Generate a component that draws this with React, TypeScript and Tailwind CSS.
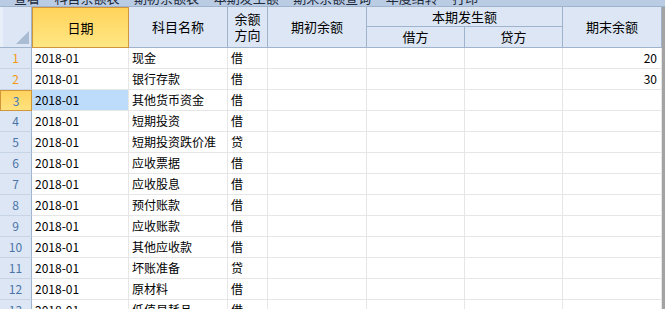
type Row = {
  no: number
  date: string
  name: string
  dir: string
  end?: string
}

const rows: Row[] = [
  { no: 1, date: "2018-01", name: "现金", dir: "借", end: "20" },
  { no: 2, date: "2018-01", name: "银行存款", dir: "借", end: "30" },
  { no: 3, date: "2018-01", name: "其他货币资金", dir: "借" },
  { no: 4, date: "2018-01", name: "短期投资", dir: "借" },
  { no: 5, date: "2018-01", name: "短期投资跌价准", dir: "贷" },
  { no: 6, date: "2018-01", name: "应收票据", dir: "借" },
  { no: 7, date: "2018-01", name: "应收股息", dir: "借" },
  { no: 8, date: "2018-01", name: "预付账款", dir: "借" },
  { no: 9, date: "2018-01", name: "应收账款", dir: "借" },
  { no: 10, date: "2018-01", name: "其他应收款", dir: "借" },
  { no: 11, date: "2018-01", name: "坏账准备", dir: "贷" },
  { no: 12, date: "2018-01", name: "原材料", dir: "借" },
  { no: 13, date: "2018-01", name: "低值易耗品", dir: "借" },
]

const cols = "grid-cols-[32px_97px_99px_40px_99px_98px_98px_99px]"
const hd = "flex items-center justify-center border-r border-b border-[#9fb3cc] bg-[#dce6f4] text-[13px] text-black"
const cell = "h-[21px] border-r border-b border-[#e6e6e6] px-[3px] leading-[20px] text-[12px] text-black whitespace-nowrap overflow-hidden"

function RowNo({ no }: { no: number }) {
  if (no === 3) {
    return (
      <div className="flex h-[21px] items-center justify-center border border-[#d3953a] bg-gradient-to-b from-[#ffd35e] to-[#ffe27e] text-[12px] text-[#3f78c0]">
        {no}
      </div>
    )
  }
  return (
    <div
      className={`flex h-[21px] items-center justify-center border-r border-b border-r-[#9fb3cc] border-b-[#c6d4e6] bg-[#dce6f4] text-[12px] ${
        no <= 2 ? "text-[#f39a12]" : "text-[#4a74a8]"
      }`}
    >
      {no}
    </div>
  )
}

export default function App() {
  return (
    <div
      className="relative h-[309px] w-[665px] overflow-hidden bg-white"
      style={{ fontFamily: '"Noto Sans CJK SC", "Noto Sans", sans-serif' }}
    >
      {/* toolbar strip, mostly scrolled out of view */}
      <div className="h-[7px] overflow-hidden border-b border-[#9fb3cc] bg-[#b9cce4]">
        <div className="-mt-[9px] whitespace-pre pl-[14px] text-[13px] leading-[14px] text-[#1e2a3a]">
          {"查看     科目余额表     期初余额表     本期发生额     期末余额查询     年度结转     打印"}
        </div>
      </div>

      <div className="flex">
        <div className="w-[662px]">
          {/* header */}
          <div className={`grid ${cols} grid-rows-[20px_21px]`}>
            <div className="relative row-span-2 border-r border-b border-[#9fb3cc] bg-[#dce6f4]">
              <div className="absolute top-0 left-0 h-full w-[3px] bg-[#e8eff8]" />
              <div className="absolute right-[2px] bottom-[3px] h-0 w-0 border-b-[13px] border-l-[13px] border-b-[#a9bcd3] border-l-transparent" />
            </div>
            <div className="row-span-2 flex items-center justify-center border border-[#d3953a] bg-gradient-to-b from-[#ffd35a] to-[#ffe783] text-[13px]">
              日期
            </div>
            <div className={`${hd} row-span-2`}>科目名称</div>
            <div className={`${hd} row-span-2 flex-col`}>
              <span className="leading-[16px]">余额</span>
              <span className="leading-[16px]">方向</span>
            </div>
            <div className={`${hd} row-span-2`}>期初余额</div>
            <div className={`${hd} col-span-2`}>本期发生额</div>
            <div className={`${hd} row-span-2`}>期末余额</div>
            <div className={`${hd} row-start-2 col-start-6`}>借方</div>
            <div className={`${hd} row-start-2 col-start-7`}>贷方</div>
          </div>

          {/* body */}
          {rows.map((r) => (
            <div key={r.no} className={`grid ${cols}`}>
              <RowNo no={r.no} />
              <div className={`${cell} ${r.no === 3 ? "bg-[#bddcfb]" : ""}`}>{r.date}</div>
              <div className={cell}>{r.name}</div>
              <div className={cell}>{r.dir}</div>
              <div className={cell} />
              <div className={cell} />
              <div className={cell} />
              <div className={`${cell} pr-[4px] text-right`}>{r.end ?? ""}</div>
            </div>
          ))}
        </div>
        <div className="w-[3px] bg-[#a3a3a3]" />
      </div>
    </div>
  )
}
